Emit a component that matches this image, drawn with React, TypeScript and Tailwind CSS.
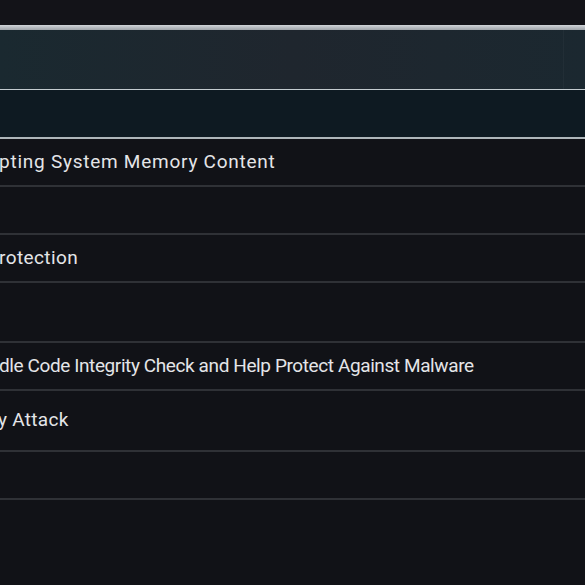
const rows: { text: string; h: string; cls: string }[] = [
  { text: "pting System Memory Content", h: "h-[48px]", cls: "-ml-[1px] tracking-[0.75px]" },
  { text: "", h: "h-[48px]", cls: "" },
  { text: "rotection", h: "h-[48px]", cls: "-ml-[1px] tracking-[0.4px]" },
  { text: "", h: "h-[60px]", cls: "" },
  { text: "dle Code Integrity Check and Help Protect Against Malware", h: "h-[48px]", cls: "-ml-[1px] tracking-[-0.4px]" },
  { text: "y Attack", h: "h-[61px]", cls: "-ml-[2px] tracking-[0.3px]" },
  { text: "", h: "h-[48px]", cls: "" },
];

export default function App() {
  return (
    <div
      className="w-[585px] h-[585px] overflow-hidden bg-[#111217] flex flex-col"
      style={{ fontFamily: "Roboto, 'Liberation Sans', sans-serif" }}
    >
      <div className="h-[25px] bg-[#131318] shrink-0" />
      <div className="h-[5px] shrink-0 bg-gradient-to-b from-[#d0d4d8] to-[#9ea3a8]" />
      <div className="h-[59px] shrink-0 flex bg-gradient-to-r from-[#1a2930] via-[#1f262e] to-[#1b2830]">
        <div className="flex-1" />
        <div className="w-[22px] border-l border-[#222e36]" />
      </div>
      <div className="h-[1px] shrink-0 bg-[#c4ccd0]" />
      <div className="h-[47px] shrink-0 bg-[#0e1a22]" />
      <div className="h-[2px] shrink-0 bg-[#aeb6ba]" />
      {rows.map((r, i) => (
        <div
          key={i}
          className={`${r.h} shrink-0 flex items-center border-b-2 border-[#2f3136] overflow-hidden`}
        >
          <span className={`${r.cls} whitespace-nowrap text-[19px] text-[#e4e5e8]`}>
            {r.text}
          </span>
        </div>
      ))}
      <div className="flex-1 bg-[#111217]" />
    </div>
  );
}
